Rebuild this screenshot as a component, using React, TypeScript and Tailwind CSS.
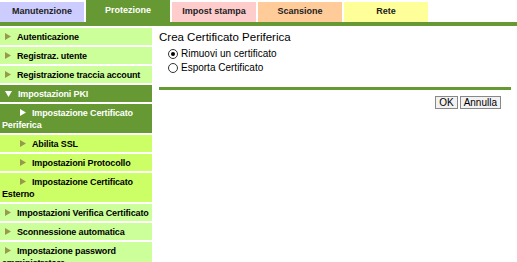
import { useState } from 'react';

const tabs = [
  { name: 'Manutenzione', bg: 'bg-[#ccccff]', text: 'text-[#222]', active: false },
  { name: 'Protezione', bg: 'bg-[#669933]', text: 'text-white', active: true },
  { name: 'Impost stampa', bg: 'bg-[#ffcccc]', text: 'text-[#222]', active: false },
  { name: 'Scansione', bg: 'bg-[#ffcc99]', text: 'text-[#222]', active: false },
  { name: 'Rete', bg: 'bg-[#ffff99]', text: 'text-[#222]', active: false },
];

type Item = { label: string; level: 0 | 1; tone: 'light' | 'dark' | 'sub'; open?: boolean };

const menu: Item[] = [
  { label: 'Autenticazione', level: 0, tone: 'light' },
  { label: 'Registraz. utente', level: 0, tone: 'light' },
  { label: 'Registrazione traccia account', level: 0, tone: 'light' },
  { label: 'Impostazioni PKI', level: 0, tone: 'dark', open: true },
  { label: 'Impostazione Certificato Periferica', level: 1, tone: 'dark' },
  { label: 'Abilita SSL', level: 1, tone: 'sub' },
  { label: 'Impostazioni Protocollo', level: 1, tone: 'sub' },
  { label: 'Impostazione Certificato Esterno', level: 1, tone: 'sub' },
  { label: 'Impostazioni Verifica Certificato', level: 0, tone: 'light' },
  { label: 'Sconnessione automatica', level: 0, tone: 'light' },
  { label: 'Impostazione password amministratore', level: 0, tone: 'light' },
];

function Arrow({ open, color }: { open?: boolean; color: string }) {
  // piccolo triangolo del menu
  return open ? (
    <svg width="7" height="6" viewBox="0 0 7 6" className="inline-block align-baseline">
      <path d="M0 0 L7 0 L3.5 6 Z" fill={color} />
    </svg>
  ) : (
    <svg width="6" height="7" viewBox="0 0 6 7" className="inline-block align-baseline">
      <path d="M0 0 L6 3.5 L0 7 Z" fill={color} />
    </svg>
  );
}

function Radio({ checked }: { checked: boolean }) {
  return (
    <span className="w-[10px] h-[10px] rounded-full border border-[#333] bg-white flex items-center justify-center flex-shrink-0">
      {checked && <span className="w-[4px] h-[4px] rounded-full bg-black" />}
    </span>
  );
}

export default function App() {
  const [choice, setChoice] = useState('remove');

  return (
    <div className="w-[517px] h-[262px] overflow-hidden bg-white font-['Liberation_Sans',Arial,sans-serif]">
      {/* Tabs */}
      <div className="flex gap-[2px] h-[22px]">
        {tabs.map((t) => (
          <div
            key={t.name}
            className={
              t.active
                ? `w-[84px] h-[22px] ${t.bg} ${t.text} flex items-center justify-center text-[9px] font-bold pb-[1px]`
                : `w-[84px] h-[20px] mt-[2px] ${t.bg} ${t.text} flex items-center justify-center text-[9px] font-bold`
            }
          >
            {t.name}
          </div>
        ))}
      </div>
      <div className="h-[4px] bg-[#669933]" />

      <div className="flex mt-[2px]">
        {/* Sidebar */}
        <nav className="w-[152px] flex flex-col gap-[2px] flex-shrink-0">
          {menu.map((m) => {
            const bg = m.tone === 'dark' ? 'bg-[#669933]' : m.tone === 'sub' ? 'bg-[#ccff66]' : 'bg-[#ccff99]';
            const color = m.tone === 'dark' ? 'text-white' : 'text-black';
            const arrow = m.tone === 'dark' ? '#ffffff' : '#99994d';
            return (
              <div
                key={m.label}
                className={`${bg} ${color} text-[9px] font-bold leading-[12px] tracking-[-0.15px] pl-[2px] pt-[3px] pb-[2px]`}
              >
                <span className={m.level === 1 ? 'inline-block w-[18px]' : 'inline-block w-[3px]'} />
                <Arrow open={m.open} color={arrow} />
                <span className="inline-block w-[6px]" />
                {m.label}
              </div>
            );
          })}
        </nav>

        {/* Main */}
        <main className="flex-1 pl-[7px] pr-[6px]">
          <h1 className="text-[11.5px] text-black leading-[14px] pt-[2px]">Crea Certificato Periferica</h1>
          <div className="pl-[9px] mt-[3px] flex flex-col text-[10px] leading-[14px] text-black">
            <label className="flex items-center gap-[3px]" onClick={() => setChoice('remove')}>
              <Radio checked={choice === 'remove'} />
              Rimuovi un certificato
            </label>
            <label className="flex items-center gap-[3px]" onClick={() => setChoice('export')}>
              <Radio checked={choice === 'export'} />
              Esporta Certificato
            </label>
          </div>
          <div className="h-[3px] bg-[#669933] mt-[12px]" />
          <div className="flex justify-end gap-[2px] pr-[10px] mt-[6px]">
            <button className="h-[13px] px-[3px] text-[10px] leading-[10px] border border-[#888] bg-[#f2f2f2] text-black">OK</button>
            <button className="h-[13px] px-[3px] text-[10px] leading-[10px] border border-[#888] bg-[#f2f2f2] text-black">Annulla</button>
          </div>
        </main>
      </div>
    </div>
  );
}
